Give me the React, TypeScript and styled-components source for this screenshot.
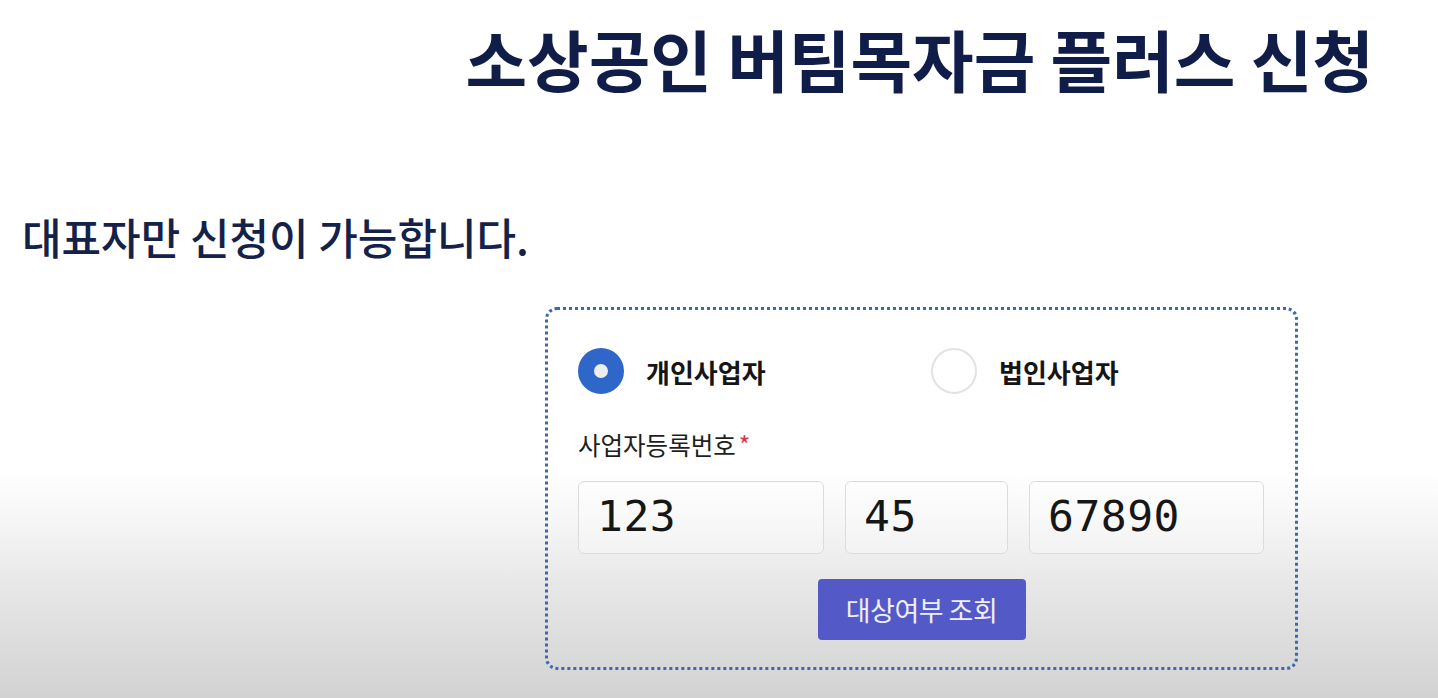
import * as React from 'react';
import styled, { createGlobalStyle } from 'styled-components';

const GlobalStyle = createGlobalStyle`
    html, body {
        margin: 0;
        padding: 0;
    }
    body {
        font-family: 'Noto Sans CJK KR', 'Noto Sans', sans-serif;
        background: #ffffff;
    }
`

const Page = styled.div`
    width: 1438px;
    height: 698px;
    overflow: hidden;
    background: linear-gradient(180deg, #ffffff 0px, #ffffff 472px, #f6f6f6 520px, #e6e6e6 590px, #d2d2d2 698px);
    display: flex;
    flex-direction: column;
`

const Title = styled.h1`
    margin: 18px 64px 0 0;
    text-align: right;
    font-size: 67px;
    line-height: 80px;
    font-weight: 700;
    color: #0f1d48;
`

const Notice = styled.p`
    margin: 108px 0 0 22px;
    font-size: 43px;
    line-height: 60px;
    font-weight: 500;
    color: #14224a;
`

const FormBox = styled.div`
    margin: 41px 0 0 545px;
    width: 753px;
    height: 363px;
    box-sizing: border-box;
    border: 3px dotted #3a69ad;
    border-radius: 12px;
    padding: 38px 30px 0 30px;
    display: flex;
    flex-direction: column;
`

const RadioRow = styled.div`
    display: grid;
    grid-template-columns: 353px 1fr;
`

const RadioOption = styled.label`
    display: flex;
    align-items: center;
    gap: 22px;
    font-size: 26px;
    font-weight: 700;
    color: #151515;
`

const RadioDot = styled.span<{ $checked?: boolean }>`
    width: 46px;
    height: 46px;
    box-sizing: border-box;
    border-radius: 50%;
    flex: none;
    background: ${(p) => (p.$checked ? '#eeeeee' : '#ffffff')};
    border: ${(p) => (p.$checked ? '16px solid #2f66c9' : '2px solid #e2e2e2')};
`

const FieldLabel = styled.div`
    margin-top: 34px;
    font-size: 24.5px;
    line-height: 34px;
    color: #1e1e1e;
`

const Required = styled.span`
    color: #d4374a;
    margin-left: 3px;
`

const InputRow = styled.div`
    margin-top: 19px;
    display: flex;
    gap: 21px;
`

const NumberInput = styled.div<{ $width: number }>`
    width: ${(p) => p.$width}px;
    height: 73px;
    box-sizing: border-box;
    border: 1.5px solid #dcdcdc;
    border-radius: 6px;
    background: rgba(255, 255, 255, 0.25);
    padding: 0 0 4px 18px;
    display: flex;
    align-items: center;
    font-family: 'DejaVu Sans Mono', 'Liberation Mono', monospace;
    font-size: 43px;
    letter-spacing: 0.5px;
    color: #161616;
`

const ButtonRow = styled.div`
    margin-top: 25px;
    display: flex;
    justify-content: center;
`

const CheckButton = styled.button`
    width: 208px;
    height: 61px;
    border: none;
    border-radius: 4px;
    background: #5459c8;
    color: #eeeef5;
    font-family: 'Noto Sans CJK KR', sans-serif;
    font-size: 27px;
    letter-spacing: -0.5px;
`

export default function App() {
    return (
        <>
            <GlobalStyle />
            <Page>
                <Title>소상공인 버팀목자금 플러스 신청</Title>
                <Notice>대표자만 신청이 가능합니다.</Notice>
                <FormBox>
                    <RadioRow>
                        <RadioOption>
                            <RadioDot $checked />
                            개인사업자
                        </RadioOption>
                        <RadioOption>
                            <RadioDot />
                            법인사업자
                        </RadioOption>
                    </RadioRow>
                    <FieldLabel>
                        사업자등록번호<Required>*</Required>
                    </FieldLabel>
                    <InputRow>
                        <NumberInput $width={246}>123</NumberInput>
                        <NumberInput $width={163}>45</NumberInput>
                        <NumberInput $width={235}>67890</NumberInput>
                    </InputRow>
                    <ButtonRow>
                        <CheckButton>대상여부 조회</CheckButton>
                    </ButtonRow>
                </FormBox>
            </Page>
        </>
    );
}
